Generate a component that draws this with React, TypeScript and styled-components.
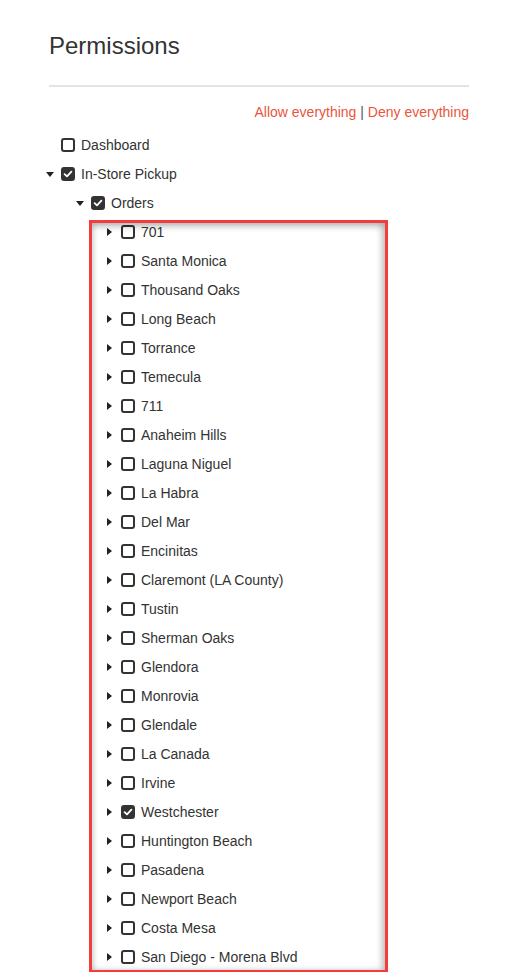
import React from "react";
import styled, { createGlobalStyle } from "styled-components";

const GlobalStyle = createGlobalStyle`
  html, body {
    margin: 0;
    padding: 0;
    background: #fff;
  }
  body {
    font-family: "Liberation Sans", Arial, sans-serif;
    color: #333;
    overflow: hidden;
  }
`;

const Page = styled.div`
  width: 420px;
  margin-left: 49px;
`;

const Title = styled.h1`
  margin: 0;
  padding-top: 32px;
  font-size: 24px;
  line-height: 28.8px;
  font-weight: 400;
  color: #333;
`;

const Divider = styled.hr`
  margin: 24px 0 0;
  border: 0;
  height: 2px;
  background: #e4e4e4;
`;

const Actions = styled.div`
  margin-top: 15px;
  text-align: right;
  font-size: 14px;
  line-height: 20px;
  color: #555;
`;

const ActionLink = styled.a`
  color: #e9553d;
  text-decoration: none;
  cursor: pointer;
`;

const Tree = styled.ul`
  list-style: none;
  margin: 9px 0 0 -3px;
  padding: 0;
`;

const Group = styled.ul<{ $marked?: boolean }>`
  list-style: none;
  margin: 0;
  padding: 0;
  position: relative;

  ${({ $marked }) =>
    $marked &&
    `
    &::after {
      content: "";
      position: absolute;
      left: 43px;
      top: 2px;
      width: 299px;
      height: 753px;
      box-sizing: border-box;
      border: 3px solid #f53c3c;
      box-shadow: inset 0 4px 6px rgba(0, 0, 0, 0.2),
        inset -4px 0 6px rgba(0, 0, 0, 0.16),
        inset 3px 0 4px rgba(0, 0, 0, 0.06);
      pointer-events: none;
    }
  `}
`;

const Row = styled.div<{ $level: number }>`
  display: flex;
  align-items: center;
  height: 29px;
  padding-left: ${({ $level }) => $level * 30}px;
  font-size: 14px;
  color: #333;
`;

const CaretSlot = styled.span`
  width: 15px;
  height: 14px;
  display: flex;
  align-items: center;
  flex-shrink: 0;
`;

const CaretDown = styled.span`
  width: 0;
  height: 0;
  border-left: 4px solid transparent;
  border-right: 4px solid transparent;
  border-top: 5px solid #222;
`;

const CaretRight = styled.span`
  margin-left: 1px;
  width: 0;
  height: 0;
  border-top: 4px solid transparent;
  border-bottom: 4px solid transparent;
  border-left: 5px solid #222;
`;

const Box = styled.span<{ $checked?: boolean }>`
  width: 14px;
  height: 14px;
  box-sizing: border-box;
  border: 2px solid #333;
  border-radius: 3px;
  background: ${({ $checked }) => ($checked ? "#333" : "#fff")};
  display: flex;
  align-items: center;
  justify-content: center;
  flex-shrink: 0;
  margin-right: 6px;
`;

const Label = styled.span`
  white-space: nowrap;
`;

type Caret = "none" | "open" | "closed";

function Check() {
  return (
    <svg width="10" height="10" viewBox="0 0 10 10">
      <path d="M1.6 5.2 L4 7.4 L8.4 2.6" fill="none" stroke="#fff" strokeWidth="1.8" strokeLinecap="round" strokeLinejoin="round" />
    </svg>
  );
}

function Node({ level, caret, checked, label }: { level: number; caret: Caret; checked?: boolean; label: string }) {
  return (
    <Row $level={level}>
      <CaretSlot>
        {caret === "open" && <CaretDown />}
        {caret === "closed" && <CaretRight />}
      </CaretSlot>
      <Box $checked={checked}>{checked && <Check />}</Box>
      <Label>{label}</Label>
    </Row>
  );
}

const stores: { name: string; checked?: boolean }[] = [
  { name: "701" },
  { name: "Santa Monica" },
  { name: "Thousand Oaks" },
  { name: "Long Beach" },
  { name: "Torrance" },
  { name: "Temecula" },
  { name: "711" },
  { name: "Anaheim Hills" },
  { name: "Laguna Niguel" },
  { name: "La Habra" },
  { name: "Del Mar" },
  { name: "Encinitas" },
  { name: "Claremont (LA County)" },
  { name: "Tustin" },
  { name: "Sherman Oaks" },
  { name: "Glendora" },
  { name: "Monrovia" },
  { name: "Glendale" },
  { name: "La Canada" },
  { name: "Irvine" },
  { name: "Westchester", checked: true },
  { name: "Huntington Beach" },
  { name: "Pasadena" },
  { name: "Newport Beach" },
  { name: "Costa Mesa" },
  { name: "San Diego - Morena Blvd" },
];

export default function App() {
  return (
    <>
      <GlobalStyle />
      <Page>
        <Title>Permissions</Title>
        <Divider />
        <Actions>
          <ActionLink>Allow everything</ActionLink> | <ActionLink>Deny everything</ActionLink>
        </Actions>
        <Tree>
          <li>
            <Node level={0} caret="none" label="Dashboard" />
          </li>
          <li>
            <Node level={0} caret="open" checked label="In-Store Pickup" />
            <Group>
              <li>
                <Node level={1} caret="open" checked label="Orders" />
                <Group $marked>
                  {stores.map((s) => (
                    <li key={s.name}>
                      <Node level={2} caret="closed" checked={s.checked} label={s.name} />
                    </li>
                  ))}
                </Group>
              </li>
            </Group>
          </li>
        </Tree>
      </Page>
    </>
  );
}
